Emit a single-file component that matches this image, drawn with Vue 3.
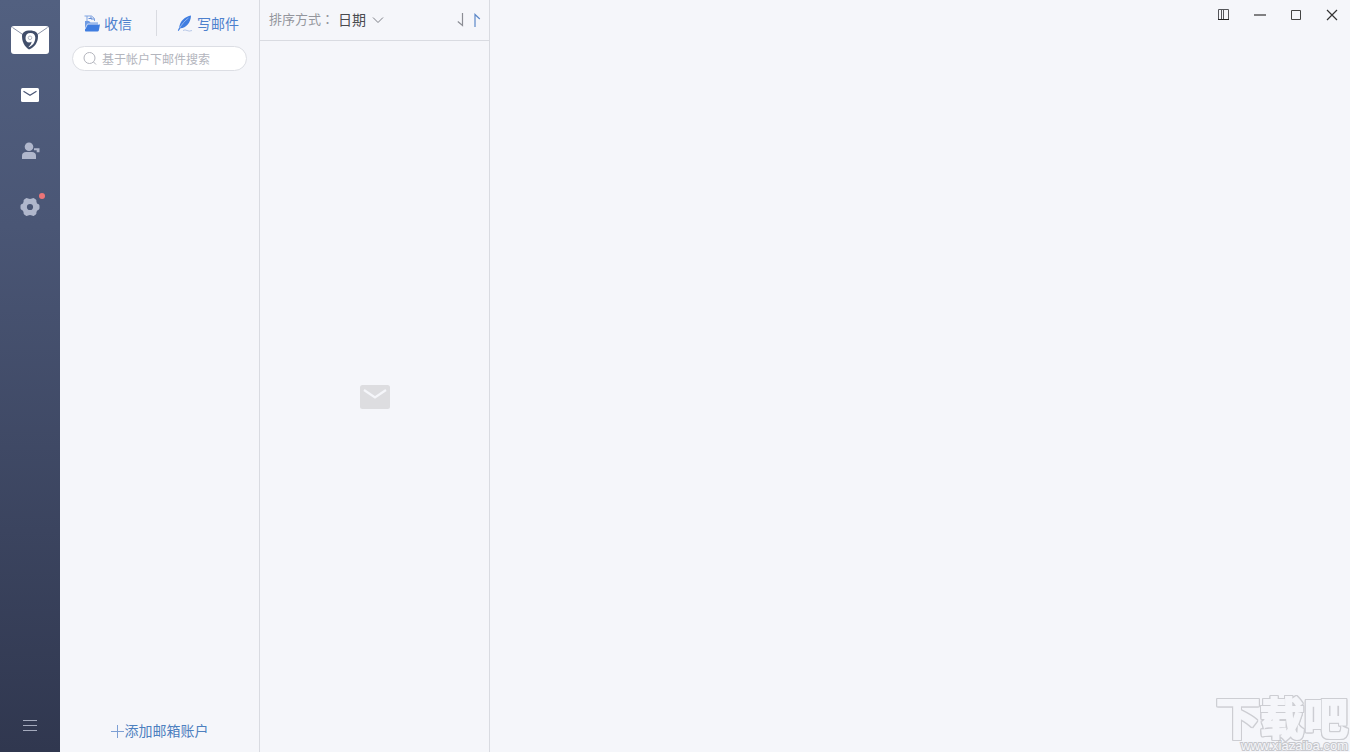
<script setup>
import { ref } from 'vue'

const query = ref('')
const sortBy = ref('date')
</script>

<template>
  <div class="app">
    <nav class="rail" aria-label="主导航">
      <svg class="logo" width="38" height="30" viewBox="0 0 38 30" aria-hidden="true">
        <rect x="0" y="1" width="38" height="28" rx="3" fill="#fff" />
        <path d="M1.500 2.500 12.500 10M36.500 2.500 25.500 10" stroke="#8b93a8" stroke-width="1" fill="none" />
        <path d="M19 5.500c-5 0-8 2-8 5.500 0 5.500 2 10 7 13.500 6-2.500 9-7.500 9-13 0-4-3-6-8-6z" fill="#414e6a" />
        <path d="M19.500 8c-3.200 0-5 2-5 4.900 0 2.800 1.400 4.600 3.700 4.600 1.200 0 1.900-.3 2.500-.9-.3 2.200-1.400 3.800-3.400 5.600 4.500-1.300 7-5.200 7-9.500 0-2.900-1.800-4.700-4.800-4.700z" fill="#fff" />
        <circle cx="19" cy="12.800" r="1.800" fill="none" stroke="#a3a9b9" stroke-width=".8" />
      </svg>
      <button class="nav mail" type="button" aria-label="邮件">
        <svg width="20" height="16" viewBox="0 0 20 16">
          <rect x="1" y="1" width="18" height="14" rx="1.500" fill="#fff" />
          <path d="M3.500 4.200 10 8.300l6.500-4.100" stroke="#4a5675" stroke-width="1.200" fill="none" />
        </svg>
      </button>
      <button class="nav" type="button" aria-label="联系人">
        <svg width="20" height="18" viewBox="0 0 20 18" fill="#b0b7cc">
          <circle cx="9" cy="4.800" r="4.300" />
          <path d="M2 17v-3.500C2 11.300 3.800 10 6 10h6c2.200 0 4 1.300 4 3.500V17z" />
          <path d="M14 6.200h5.500v4h-2.800V8.200H14z" />
        </svg>
      </button>
      <button class="nav" type="button" aria-label="设置">
        <svg width="20" height="20" viewBox="0 0 20 20">
          <path d="M6 1.300Q7 .8 8 1.600Q10 2.400 12 1.600Q13 .8 14 1.300L15.800 2.500Q16.700 3.200 16.400 4.400Q16.500 6.700 18.600 7.300Q19.400 7.700 19.500 8.700V11.300Q19.400 12.300 18.600 12.700Q16.500 13.300 16.400 15.600Q16.700 16.800 15.800 17.500L14 18.700Q13 19.200 12 18.400Q10 17.600 8 18.400Q7 19.200 6 18.700L4.200 17.500Q3.300 16.800 3.600 15.600Q3.500 13.300 1.400 12.700Q.6 12.300.5 11.300V8.700Q.6 7.700 1.400 7.300Q3.500 6.700 3.600 4.400Q3.300 3.200 4.200 2.500Z" fill="#b0b7cc" />
          <circle cx="10" cy="10" r="3.100" fill="#4a5675" />
        </svg>
        <span class="dot"></span>
      </button>
      <button class="nav menu" type="button" aria-label="菜单">
        <svg width="16" height="12" viewBox="0 0 16 12">
          <path d="M1 .5h14M1 5.500h14M1 10.500h14" stroke="#a4aabd" stroke-width="1" />
        </svg>
      </button>
    </nav>

    <aside class="accounts">
      <div class="actions">
        <button class="action" type="button">
          <svg width="16" height="17" viewBox="0 0 16 17">
            <path d="M.5 1h7l3 2.500V6M3 1v5" stroke="#7ea3e0" stroke-width="1" fill="none" />
            <path d="M4.500 3.500h3M7 1.500V4h3" stroke="#608bd6" stroke-width="1" fill="none" />
            <path d="M1 6h4l1.500 1.500H14V10H4L1 14.500z" fill="#6f9be3" />
            <path d="M3.500 9.500H16l-1.200 6c-.2.600-.6 1-1.300 1H2c-.7 0-1-.4-1-1v-1z" fill="#3f7de0" />
            <path d="M1 14 3.500 9H15" stroke="#f5f6fa" stroke-width=".7" fill="none" />
          </svg>
          收信
        </button>
        <span class="rule"></span>
        <button class="action" type="button">
          <svg width="16" height="17" viewBox="0 0 16 17">
            <path d="M14 .5C8 1.500 3 6 2.200 12.500L.8 15.500l.8.500 1.900-2.800C9 13 13.800 8 14 .5z" fill="#3f7de0" />
            <path d="M2.500 13.200C5 9 8 5.500 11.500 3" stroke="#a8c4f0" stroke-width=".8" fill="none" />
            <path d="M6 15.500q2-1.200 4 0t5 0" stroke="#a8bde2" stroke-width=".8" fill="none" />
          </svg>
          写邮件
        </button>
      </div>
      <label class="search">
        <svg width="14" height="14" viewBox="0 0 14 14" fill="none" stroke="#b3b5bd" stroke-width="1" aria-hidden="true">
          <circle cx="6.500" cy="6" r="5.500" /><path d="m10.500 10 2.500 2.500" />
        </svg>
        <input v-model="query" type="text" placeholder="基于帐户下邮件搜索" aria-label="基于帐户下邮件搜索" />
      </label>
      <button class="add" type="button">
        <svg width="14" height="14" viewBox="0 0 14 14"><path d="M6.500 1v13M0 7.500h13" stroke="#7d9fd3" stroke-width="1" /></svg>
        添加邮箱账户
      </button>
    </aside>

    <section class="list">
      <header class="sortbar">
        <label class="sortlabel" for="sort">排序方式：</label>
        <span class="picker">
          <select id="sort" v-model="sortBy"><option value="date">日期</option></select>
          <svg width="12" height="8" viewBox="0 0 12 8" aria-hidden="true"><path d="m1 1.500 5 5 5-5" fill="none" stroke="#7d7f87" /></svg>
        </span>
        <span class="orders">
          <button type="button" aria-label="降序"><svg width="8" height="14" viewBox="0 0 8 14"><path d="M5.500 0v12.500L.8 8.500" fill="none" stroke="#8b8d94" stroke-width="1.200" /></svg></button>
          <button type="button" aria-label="升序"><svg width="8" height="14" viewBox="0 0 8 14"><path d="M2 14V1.500L6.800 6" fill="none" stroke="#5c88c8" stroke-width="1.200" /></svg></button>
        </span>
      </header>
      <div class="empty">
        <svg width="30" height="24" viewBox="0 0 30 24" aria-hidden="true">
          <rect width="30" height="24" rx="2.500" fill="#dddde0" />
          <path d="m4 5 11 7.500L26 5" fill="none" stroke="#f5f6fa" stroke-width="2.200" />
        </svg>
      </div>
    </section>

    <main class="reader">
      <div class="window">
        <button type="button" aria-label="布局"><svg width="12" height="12" viewBox="0 0 12 12" fill="none" stroke="#55565a"><path d="M.5.5h10v10H.5zM3.500.5v10M5.500.5v10" /><path d="M0 10.500h11" stroke="#222" /></svg></button>
        <button type="button" aria-label="最小化"><svg width="12" height="12" viewBox="0 0 12 12"><path d="M0 6h12" stroke="#333" stroke-width="1.200" /></svg></button>
        <button type="button" aria-label="最大化"><svg width="12" height="12" viewBox="0 0 12 12"><path d="M1.500 1.500h9v9h-9z" fill="none" stroke="#444" /></svg></button>
        <button type="button" aria-label="关闭"><svg width="12" height="12" viewBox="0 0 12 12"><path d="m1 1 10 10M11 1 1 11" stroke="#333" stroke-width="1.200" /></svg></button>
      </div>
    </main>

    <div class="mark">
      <span class="name">下载吧</span>
      <span class="site">www.xiazaiba.com</span>
    </div>
  </div>
</template>

<style>
body {
  background: #f5f6fa;
}
</style>

<style scoped>
.app {
  position: relative;
  display: flex;
  height: 100vh;
  overflow: hidden;
  background: #f5f6fa;
  font-family: "Liberation Sans", "Noto Sans CJK SC", sans-serif;
  font-size: 14px;
  line-height: 20px;
}
svg {
  display: block;
  flex: none;
}
button {
  display: flex;
  align-items: center;
  justify-content: center;
  padding: 0;
  border: 0;
  background: none;
  font: inherit;
  color: inherit;
}
.rail {
  display: flex;
  flex: none;
  flex-direction: column;
  align-items: center;
  box-sizing: border-box;
  width: 60px;
  padding: 25px 0 6px;
  background: linear-gradient(#526080, #4a5675 30%, #30374f);
}
.logo {
  margin-bottom: 12px;
}
.nav {
  position: relative;
  width: 60px;
  height: 56px;
}
.menu {
  height: 40px;
  margin-top: auto;
}
.dot {
  position: absolute;
  top: 14px;
  right: 15px;
  width: 6px;
  height: 6px;
  border-radius: 50%;
  background: #ec7578;
}
.accounts {
  display: flex;
  flex: none;
  flex-direction: column;
  box-sizing: border-box;
  width: 200px;
  padding: 10px 12px 11px;
  border-right: 1px solid #d9dbe1;
}
.actions {
  display: flex;
  align-items: center;
  height: 26px;
  margin-bottom: 10px;
  padding: 0 8px 0 12px;
  color: #4d80cd;
}
.action {
  gap: 4px;
  padding-top: 1px;
}
.rule {
  width: 1px;
  height: 26px;
  margin: 0 20px 0 24px;
  background: #d9dbe1;
}
.search {
  display: flex;
  align-items: center;
  box-sizing: border-box;
  height: 25px;
  padding: 0 10px;
  gap: 5px;
  border: 1px solid #dcdee4;
  border-radius: 13px;
  background: #fff;
}
.search input {
  flex: 1;
  min-width: 0;
  padding: 2px 0 0;
  border: 0;
  outline: 0;
  background: none;
  font: inherit;
  font-size: 12px;
}
.search input::placeholder {
  color: #b3b5bd;
}
.add {
  margin-top: auto;
  color: #4d80bf;
}
.list {
  display: flex;
  flex: none;
  flex-direction: column;
  box-sizing: border-box;
  width: 230px;
  border-right: 1px solid #d9dbe1;
}
.sortbar {
  display: flex;
  align-items: center;
  box-sizing: border-box;
  height: 41px;
  padding: 0 8px 0 9px;
  border-bottom: 1px solid #d9dbe1;
}
.sortlabel {
  color: #94969d;
  font-family: "Liberation Sans", "Noto Sans CJK TC", sans-serif;
  font-size: 13px;
}
.picker {
  display: flex;
  align-items: center;
  gap: 6px;
  margin-left: 4px;
}
.picker select {
  appearance: none;
  padding: 0;
  border: 0;
  background: none;
  color: #4a4b50;
  font: inherit;
}
.orders {
  display: flex;
  gap: 8px;
  margin-left: auto;
}
.empty {
  display: flex;
  flex: 1;
  align-items: center;
  justify-content: center;
}
.reader {
  flex: 1;
  min-width: 0;
}
.window {
  display: flex;
  justify-content: flex-end;
  gap: 24px;
  padding: 9px 12px;
}
.mark {
  position: absolute;
  right: 2px;
  bottom: 0;
  display: flex;
  flex-direction: column;
  align-items: flex-end;
  color: #f5f6fa;
  font-weight: 700;
  white-space: nowrap;
}
.name {
  font-size: 44px;
  line-height: 40px;
  -webkit-text-stroke: 2px #f5f6fa;
  filter: drop-shadow(1px 0 #cdced3) drop-shadow(-1px 0 #cdced3) drop-shadow(0 1px #cdced3) drop-shadow(0 -1px #cdced3);
}
.site {
  position: relative;
  font-size: 13px;
  font-weight: 400;
  line-height: 12px;
  -webkit-text-stroke: 2px #c6c7cc;
  paint-order: stroke fill;
}
</style>
